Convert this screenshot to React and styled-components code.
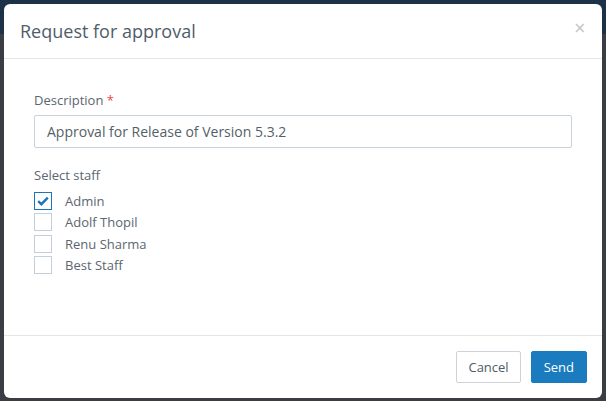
import React, { useState } from 'react';
import styled, { createGlobalStyle } from 'styled-components';

const GlobalStyle = createGlobalStyle`
  html, body {
    margin: 0;
    padding: 0;
    width: 606px;
    height: 401px;
    overflow: hidden;
  }
  body {
    font-family: 'Open Sans', 'Noto Sans', sans-serif;
    background: linear-gradient(to bottom, #1d3248 0, #1d3248 34px, #3a3e44 34px, #3a3e44 100%);
  }
`;

const Backdrop = styled.div`
  width: 606px;
  height: 401px;
  padding: 4px 4px 3px 4px;
  box-sizing: border-box;
`;

const Modal = styled.div`
  width: 598px;
  height: 394px;
  background: #fff;
  border-radius: 6px;
  display: flex;
  flex-direction: column;
  overflow: hidden;
`;

const Header = styled.div`
  height: 55px;
  box-sizing: border-box;
  border-bottom: 1px solid #e5e5e5;
  display: flex;
  align-items: center;
  justify-content: space-between;
  padding: 0 16px 0 16px;
`;

const Title = styled.h4`
  margin: 0;
  font-size: 18px;
  font-weight: 400;
  color: #4f5d6a;
  padding-bottom: 1px;
`;

const Close = styled.button`
  border: 0;
  background: none;
  padding: 0;
  font-family: 'DejaVu Sans', sans-serif;
  font-size: 15px;
  line-height: 1;
  color: #c4c4c4;
  margin-top: -6px;
  cursor: pointer;
`;

const Body = styled.div`
  flex: 1;
  padding: 32px 30px 0 30px;
`;

const Label = styled.div`
  font-size: 13px;
  color: #5b6670;
  line-height: 18px;
  margin-bottom: 6px;
`;

const Required = styled.span`
  color: #e44a4a;
`;

const Input = styled.input`
  width: 100%;
  box-sizing: border-box;
  height: 33px;
  border: 1px solid #c9d1d9;
  border-radius: 2px;
  padding: 0 12px;
  font-family: inherit;
  font-size: 14px;
  color: #555f69;
  outline: none;
`;

const Group = styled.div`
  margin-top: 18px;
`;

const List = styled.div`
  display: flex;
  flex-direction: column;
  gap: 3.3px;
  margin-top: 8px;
`;

const Row = styled.label`
  display: flex;
  align-items: center;
  gap: 13px;
  font-size: 13px;
  color: #5b6670;
  cursor: pointer;
`;

const Box = styled.span`
  width: 18px;
  height: 18px;
  box-sizing: border-box;
  border: 1px solid ${(p) => (p.checked ? '#1b75bb' : '#c6cfd7')};
  background: #fff;
  display: flex;
  align-items: center;
  justify-content: center;
`;

const Footer = styled.div`
  height: 63px;
  box-sizing: border-box;
  border-top: 1px solid #e5e5e5;
  display: flex;
  justify-content: flex-end;
  align-items: center;
  gap: 10px;
  padding: 0 15px 0 0;
`;

const Button = styled.button`
  height: 32px;
  padding: 0 ${(p) => (p.primary ? 12 : 11)}px;
  border-radius: 2px;
  font-family: inherit;
  font-size: 13px;
  border: 1px solid ${(p) => (p.primary ? '#1a7bbf' : '#ccd3da')};
  background: ${(p) => (p.primary ? '#1a7bbf' : '#fff')};
  color: ${(p) => (p.primary ? '#fff' : '#505b66')};
  cursor: pointer;
`;

const Check = () => (
  <svg width="12" height="10" viewBox="0 0 12 10">
    <path d="M1.2 5.2 L4.4 8.2 L10.8 1.6" fill="none" stroke="#1b75bb" strokeWidth="2.4" />
  </svg>
);

const staff = ['Admin', 'Adolf Thopil', 'Renu Sharma', 'Best Staff'];

const App = () => {
  const [selected, setSelected] = useState(['Admin']);
  const toggle = (name) => {
    setSelected((s) => (s.includes(name) ? s.filter((n) => n !== name) : [...s, name]));
  };
  return (
    <Backdrop>
      <GlobalStyle />
      <Modal>
        <Header>
          <Title>Request for approval</Title>
          <Close>×</Close>
        </Header>
        <Body>
          <Label>
            Description <Required>*</Required>
          </Label>
          <Input defaultValue="Approval for Release of Version 5.3.2" />
          <Group>
            <Label>Select staff</Label>
            <List>
              {staff.map((name) => {
                const checked = selected.includes(name);
                return (
                  <Row key={name} onClick={() => toggle(name)}>
                    <Box checked={checked}>{checked && <Check />}</Box>
                    {name}
                  </Row>
                );
              })}
            </List>
          </Group>
        </Body>
        <Footer>
          <Button>Cancel</Button>
          <Button primary>Send</Button>
        </Footer>
      </Modal>
    </Backdrop>
  );
};

export default App;
